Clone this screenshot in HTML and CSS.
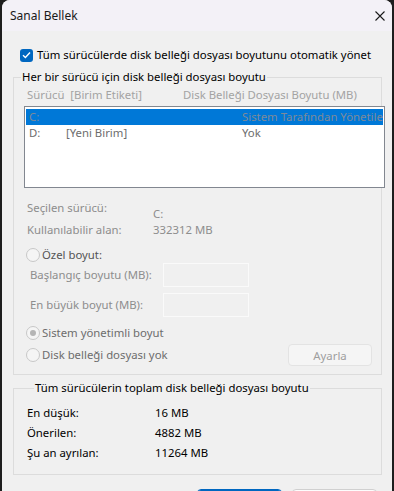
FILE: index.html
```html
<!DOCTYPE html>
<html lang="tr">
    <head>
        <meta charset="UTF-8">
        <title>Sanal Bellek</title>
        <link rel="stylesheet" href="styles.css">
    </head>
    <body>
        <div class="window">
            <div class="titlebar">
                <span class="title">Sanal Bellek</span>
                <svg class="close" width="10" height="10" viewBox="0 0 10 10">
                    <path d="M0.5 0.5 L9.5 9.5 M9.5 0.5 L0.5 9.5" stroke="#1a1a1a" stroke-width="1.1" fill="none"/>
                </svg>
            </div>

            <div class="content">
                <label class="auto">
                    <span class="check">
                        <svg width="9" height="8" viewBox="0 0 9 8">
                            <path d="M1 4.2 L3.4 6.5 L8 1.5" stroke="#fff" stroke-width="1.4" fill="none"/>
                        </svg>
                    </span>
                    Tüm sürücülerde disk belleği dosyası boyutunu otomatik yönet
                </label>

                <fieldset class="group first">
                    <legend>Her bir sürücü için disk belleği dosyası boyutu</legend>

                    <div class="colhead">
                        <span class="col1">Sürücü&nbsp; [Birim Etiketi]</span>
                        <span>Disk Belleği Dosyası Boyutu (MB)</span>
                    </div>

                    <div class="listbox">
                        <div class="item selected">
                            <span class="drive">C:</span>
                            <span class="label"></span>
                            <span class="size">Sistem Tarafından Yönetilen</span>
                        </div>
                        <div class="item">
                            <span class="drive">D:</span>
                            <span class="label">[Yeni Birim]</span>
                            <span class="size">Yok</span>
                        </div>
                    </div>

                    <div class="info">
                        <div class="inforow top">
                            <span class="key">Seçilen sürücü:</span>
                            <span class="val low">C:</span>
                        </div>
                        <div class="inforow">
                            <span class="key">Kullanılabilir alan:</span>
                            <span class="val">332312 MB</span>
                        </div>
                    </div>

                    <div class="radio custom"><span class="dot"></span>Özel boyut:</div>

                    <div class="field">
                        <span class="flabel">Başlangıç boyutu (MB):</span>
                        <input type="text" class="box" disabled>
                    </div>
                    <div class="field second">
                        <span class="flabel">En büyük boyut (MB):</span>
                        <input type="text" class="box" disabled>
                    </div>

                    <div class="radio managed"><span class="dot on"></span>Sistem yönetimli boyut</div>

                    <div class="lastrow">
                        <div class="radio"><span class="dot"></span>Disk belleği dosyası yok</div>
                        <button class="setbtn" disabled>Ayarla</button>
                    </div>
                </fieldset>

                <fieldset class="group total">
                    <legend>Tüm sürücülerin toplam disk belleği dosyası boyutu</legend>
                    <div class="trow"><span class="tkey">En düşük:</span><span>16 MB</span></div>
                    <div class="trow"><span class="tkey">Önerilen:</span><span>4882 MB</span></div>
                    <div class="trow"><span class="tkey">Şu an ayrılan:</span><span>11264 MB</span></div>
                </fieldset>

                <div class="buttons">
                    <button class="btn default">Tamam</button>
                    <button class="btn">İptal</button>
                </div>
            </div>
        </div>
    </body>
</html>
```

FILE: styles.css
```css
html, body {
    margin: 0;
    padding: 0;
    background-color: #1e1e1e;
    height: 100%;
    overflow: hidden;
}

body {
    font-family: "Segoe UI", "Noto Sans", sans-serif;
    font-size: 11.35px;
    line-height: 16px;
    color: #000;
}

.window {
    margin: 0 2px;
    height: 100%;
    background-color: #f0f0f0;
    border-radius: 8px 8px 0 0;
    overflow: hidden;
}

.titlebar {
    height: 31px;
    background-color: #f3f1f7;
    display: flex;
    align-items: center;
    justify-content: space-between;
    padding: 0 7px 0 8px;
    font-size: 12px;
}

.title {
    color: #1a1a1a;
}

.content {
    padding: 0 10px 0 11px;
}

/* 체크박스 */
.auto {
    display: flex;
    align-items: center;
    margin-top: 16px;
    height: 16px;
    padding-left: 7px;
    white-space: nowrap;
}

.check {
    width: 13px;
    height: 13px;
    border-radius: 3px;
    background-color: #0067c0;
    display: flex;
    align-items: center;
    justify-content: center;
    margin-right: 4px;
    flex-shrink: 0;
}

.group {
    margin: 0;
    padding: 0;
    border: 1px solid #dcdcdc;
    min-width: 0;
}

.group legend {
    margin-left: 7px;
    padding: 0 1px;
    line-height: 16px;
}

.first {
    margin-top: 6px;
    padding-bottom: 8px;
}

.colhead {
    display: flex;
    margin-top: 2px;
    padding-left: 13px;
    color: #a3a3a3;
}

.col1 {
    width: 156px;
}

.listbox {
    margin: 3px 0 0 10px;
    width: 357px;
    height: 78px;
    border: 1px solid #828790;
    background-color: #fff;
    padding: 1px;
    box-sizing: content-box;
    margin-right: -3px;
}

.listbox .item {
    display: flex;
    height: 16px;
    align-items: center;
    color: #6d6d6d;
    padding-left: 3px;
    white-space: nowrap;
    overflow: hidden;
}

.listbox .selected {
    background-color: #0078d7;
    margin-top: 1px;
    color: #7e8a99;
}

.drive,
.label {
    flex-shrink: 0;
}

.drive {
    width: 37px;
}

.label {
    width: 176px;
}

.info {
    margin-top: 12px;
    padding-left: 13px;
    color: #8d8d8d;
}

.inforow {
    display: flex;
}

.inforow.top {
    height: 22px;
}

.key {
    width: 126px;
}

.low {
    align-self: flex-end;
}

.radio {
    display: flex;
    align-items: center;
    height: 16px;
    padding-left: 12px;
    color: #6d6d6d;
}

.dot {
    width: 12px;
    height: 12px;
    border: 1px solid #c8c8c8;
    border-radius: 50%;
    background-color: #f5f5f5;
    margin-right: 2px;
    position: relative;
}

.dot.on::after {
    content: "";
    position: absolute;
    left: 3px;
    top: 3px;
    width: 6px;
    height: 6px;
    border-radius: 50%;
    background-color: #b5b5b5;
}

.custom {
    margin-top: 9px;
    color: #555;
}

.field {
    display: flex;
    align-items: center;
    height: 24px;
    padding-left: 16px;
    color: #8d8d8d;
}

.field.second {
    margin-top: 6px;
}

.flabel {
    width: 133px;
}

.box {
    width: 84px;
    height: 22px;
    margin: 0;
    padding: 0;
    border: 1px solid #fafafa;
    background-color: #f0f0f0;
}

.managed {
    margin-top: 8px;
}

.lastrow {
    display: flex;
    align-items: center;
    justify-content: space-between;
    margin-top: 3px;
    height: 22px;
    padding-right: 9px;
}

.setbtn {
    width: 84px;
    height: 22px;
    border: 1px solid #e3e3e3;
    border-radius: 4px;
    background-color: #f5f5f5;
    color: #9e9e9e;
    font-family: inherit;
    font-size: 11.35px;
    padding: 0;
}

.total {
    margin-top: 5px;
    padding: 7px 0 11px 13px;
}

.trow {
    display: flex;
    line-height: 20px;
}

.tkey {
    width: 128px;
}

.buttons {
    display: flex;
    justify-content: flex-end;
    gap: 10px;
    margin-top: 14px;
    padding-right: 5px;
}

.btn {
    width: 85px;
    height: 30px;
    padding: 8px 0 0;
    border: 1px solid #d0d0d0;
    border-radius: 4px;
    background-color: #fdfdfd;
    font-family: inherit;
    font-size: 11.35px;
}

.btn.default {
    border: 1px solid #0067c0;
    box-shadow: inset 0 0 0 1px #0067c0;
}
```
